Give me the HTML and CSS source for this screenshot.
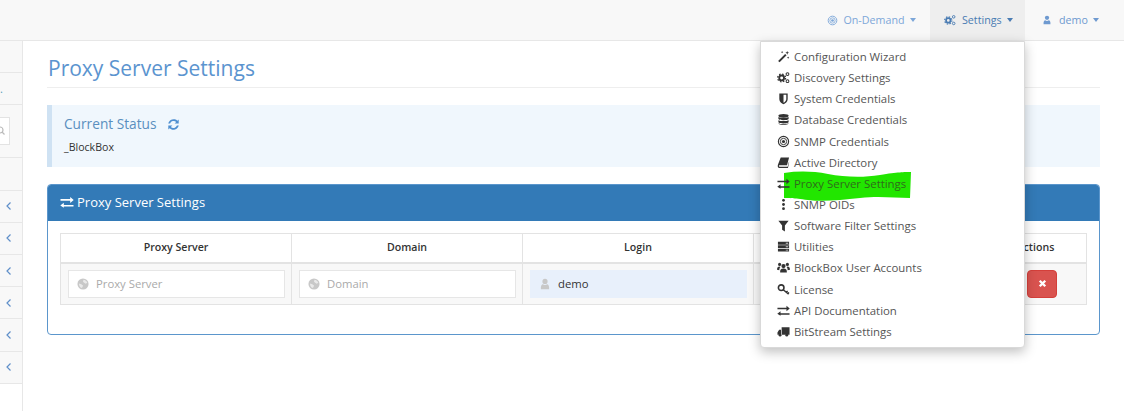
FILE: index.html
```html
<!DOCTYPE html>
<html lang="en">
<head>
<meta charset="utf-8">
<title>Proxy Server Settings</title>
<link rel="stylesheet" href="styles.css">
</head>
<body>
<svg class="defs" width="0" height="0" aria-hidden="true">
  <defs>
    <symbol id="i-wand" viewBox="0 0 14 14"><path d="M2 12.500 9.500 5" stroke="currentColor" stroke-width="2.200" fill="none"/><path d="M11 1l.6 1.400L13 3l-1.400.6L11 5l-.6-1.400L9 3l1.400-.6zM5.500 1l.4.9.9.4-.9.4-.4.9-.4-.9-.9-.4.9-.4zM12 7l.4.9.9.4-.9.4-.4.9-.4-.9-.9-.4.9-.4z" fill="currentColor"/></symbol>
    <symbol id="i-cogs" viewBox="0 0 14 14"><circle cx="5" cy="7.500" r="2.600" fill="none" stroke="currentColor" stroke-width="2"/><circle cx="5" cy="7.500" r="4.200" fill="none" stroke="currentColor" stroke-width="1.400" stroke-dasharray="1.700 1.600"/><circle cx="11.300" cy="3.300" r="1.500" fill="none" stroke="currentColor" stroke-width="1.100"/><circle cx="11.300" cy="11" r="1.500" fill="none" stroke="currentColor" stroke-width="1.100"/></symbol>
    <symbol id="i-shield" viewBox="0 0 14 14"><path fill-rule="evenodd" d="M2.500 1.500h9v6.200c0 2.600-2.600 4.600-4.500 5.600-1.900-1-4.500-3-4.500-5.600zM7 3v8.600c1.500-.9 3-2.300 3-3.900V3z" fill="currentColor"/></symbol>
    <symbol id="i-db" viewBox="0 0 14 14"><ellipse cx="7" cy="3" rx="5.500" ry="2" fill="currentColor"/><path d="M1.500 4.300c1 1.200 10 1.200 11 0V6.500c-1 1.700-10 1.700-11 0zM1.500 7.800c1 1.200 10 1.200 11 0V10c-1 1.700-10 1.700-11 0z" fill="currentColor"/><path d="M1.500 11.100c1 1.200 10 1.200 11 0c0 2.300-11 2.300-11 0z" fill="currentColor"/></symbol>
    <symbol id="i-target" viewBox="0 0 14 14"><circle cx="7" cy="7" r="5.500" fill="none" stroke="currentColor" stroke-width="1.200"/><circle cx="7" cy="7" r="3.400" fill="none" stroke="currentColor" stroke-width="1"/><circle cx="7" cy="7" r="1.700" fill="currentColor"/></symbol>
    <symbol id="i-book" viewBox="0 0 14 14"><path fill-rule="evenodd" d="M4 1.500h9l-2.200 8.500H2.500C2 10 1.900 11.700 2.800 11.700h8.700l1.500-6v1.500L11.800 13H2.600C1 13 .4 11 1 9.300z" fill="currentColor"/></symbol>
    <symbol id="i-exchange" viewBox="0 0 14 12"><path d="M.5 3.100h9.700V.9L13.700 3.900 10.200 6.900V4.700H.5zM13.500 7.300v1.600H3.800v-2.200L.3 9.400l3.500 2.300V10.500h9.700z" fill="currentColor"/></symbol>
    <symbol id="i-dots" viewBox="0 0 14 14"><circle cx="7" cy="2.500" r="1.500" fill="currentColor"/><circle cx="7" cy="7" r="1.500" fill="currentColor"/><circle cx="7" cy="11.500" r="1.500" fill="currentColor"/></symbol>
    <symbol id="i-filter" viewBox="0 0 14 14"><path d="M1.500 2h11L8.500 7v6.500l-3-2V7z" fill="currentColor"/></symbol>
    <symbol id="i-server" viewBox="0 0 14 14"><path fill-rule="evenodd" d="M1 2h12v3H1zM9.500 3v1h1V3zM11 3v1h1V3zM1 5.700h12v3H1zM9.500 6.700v1h1v-1zM11 6.700v1h1v-1zM1 9.400h12v3H1zM9.500 10.400v1h1v-1zM11 10.400v1h1v-1z" fill="currentColor"/></symbol>
    <symbol id="i-users" viewBox="0 0 14 14"><circle cx="7" cy="5.500" r="2.300" fill="currentColor"/><circle cx="2.800" cy="3.700" r="1.700" fill="currentColor"/><circle cx="11.200" cy="3.700" r="1.700" fill="currentColor"/><path d="M3.400 12.500c-.3-2.800.8-4.300 3.600-4.300s3.900 1.500 3.600 4.300zM0 9.500c0-2.300 1-3.600 2.700-3.600l1 .6C3 7.300 2.500 8.300 2.500 9.900zM14 9.500c0-2.300-1-3.600-2.700-3.600l-1 .6c.7.8 1.200 1.800 1.200 3.400z" fill="currentColor"/></symbol>
    <symbol id="i-key" viewBox="0 0 14 14"><circle cx="4.500" cy="5" r="3" fill="none" stroke="currentColor" stroke-width="1.700"/><path d="M6.700 7.200 12.500 12M10 9.700l1.500-1M11.700 11.200l1.300-1" stroke="currentColor" stroke-width="1.500" fill="none"/></symbol>
    <symbol id="i-truck" viewBox="0 0 14 14"><path d="M5 2.500h8.500v8H5zM4.300 5v5.500H.5V8l1.800-3z" fill="currentColor"/><circle cx="3.300" cy="11" r="1.500" fill="currentColor"/><circle cx="10.500" cy="11" r="1.500" fill="currentColor"/></symbol>
    <symbol id="i-user" viewBox="0 0 14 14"><circle cx="7" cy="4" r="3" fill="currentColor"/><path d="M2.200 13c-.4-3.800 1-5.700 2.300-5.700.8.600 1.600 1 2.500 1s1.700-.4 2.500-1c1.300 0 2.700 1.900 2.300 5.700z" fill="currentColor"/></symbol>
    <symbol id="i-globe" viewBox="0 0 14 14"><circle cx="7" cy="7" r="6.500" fill="currentColor"/><path d="M7.500 2c2 .2 3.800 1.600 4.500 3.500l-1.800 1.200-1.500-1-1.700-1.200zM2.300 6.500l2.700.8 2 1.500-.6 2-1.300 1C3.400 11 2.300 9 2.300 6.500z" fill="#fff" opacity=".6"/></symbol>
    <symbol id="i-refresh" viewBox="0 0 14 14"><path d="M12.600 1.500v4.400H8.200l1.700-1.700A4.100 4.100 0 0 0 3.300 5.800H1.300A6 6 0 0 1 11.200 2.900zM1.400 12.500V8.100h4.400L4.100 9.800a4.100 4.100 0 0 0 6.600-1.600h2A6 6 0 0 1 2.800 11.100z" fill="currentColor"/></symbol>
    <symbol id="i-times" viewBox="0 0 14 14"><path d="M3.500 3.500l7 7M10.500 3.500l-7 7" stroke="currentColor" stroke-width="3" fill="none"/></symbol>
    <symbol id="i-chev" viewBox="0 0 8 10"><path d="M5.500 1.500 2 5l3.500 3.500" stroke="currentColor" stroke-width="1.200" fill="none"/></symbol>
    <symbol id="i-search" viewBox="0 0 8 10"><circle cx="0" cy="4" r="3" fill="none" stroke="currentColor" stroke-width="1.200"/><path d="M2 6l2.500 2.500" stroke="currentColor" stroke-width="1.200"/></symbol>
  </defs>
</svg>

<header class="topbar">
  <nav class="topnav">
    <a class="navitem nav-ondemand"><svg class="nav-ico"><use href="#i-target"/></svg>On-Demand<span class="caret"></span></a>
    <div class="navitem nav-settings">
      <svg class="nav-ico"><use href="#i-cogs"/></svg>Settings<span class="caret"></span>
      <ul class="menu">
        <li><svg><use href="#i-wand"/></svg>Configuration Wizard</li>
        <li><svg><use href="#i-cogs"/></svg>Discovery Settings</li>
        <li><svg><use href="#i-shield"/></svg>System Credentials</li>
        <li><svg><use href="#i-db"/></svg>Database Credentials</li>
        <li><svg><use href="#i-target"/></svg>SNMP Credentials</li>
        <li><svg><use href="#i-book"/></svg>Active Directory</li>
        <li class="marked">
          <svg class="blob" viewBox="0 0 128 30" preserveAspectRatio="none"><path d="M0 2C14 0 28 0 44 3S78 7 96 4 120 1 127 1L126 27C110 27 96 25 76 27S40 31 24 29 6 27 0 27z"/></svg>
          <svg><use href="#i-exchange"/></svg><span class="label">Proxy Server Settings</span>
        </li>
        <li><svg><use href="#i-dots"/></svg>SNMP OIDs</li>
        <li><svg><use href="#i-filter"/></svg>Software Filter Settings</li>
        <li><svg><use href="#i-server"/></svg>Utilities</li>
        <li><svg><use href="#i-users"/></svg>BlockBox User Accounts</li>
        <li><svg><use href="#i-key"/></svg>License</li>
        <li><svg><use href="#i-exchange"/></svg>API Documentation</li>
        <li><svg><use href="#i-truck"/></svg>BitStream Settings</li>
      </ul>
    </div>
    <a class="navitem nav-user"><svg class="nav-ico"><use href="#i-user"/></svg>demo<span class="caret"></span></a>
  </nav>
</header>

<div class="page">
  <aside class="sidebar">
    <div class="side-row"></div>
    <div class="side-row side-dot">.</div>
    <div class="side-row side-search"><div class="side-input"><svg class="side-glass"><use href="#i-search"/></svg></div></div>
    <div class="side-row"></div>
    <div class="side-row"><svg class="chev"><use href="#i-chev"/></svg></div>
    <div class="side-row"><svg class="chev"><use href="#i-chev"/></svg></div>
    <div class="side-row"><svg class="chev"><use href="#i-chev"/></svg></div>
    <div class="side-row"><svg class="chev"><use href="#i-chev"/></svg></div>
    <div class="side-row"><svg class="chev"><use href="#i-chev"/></svg></div>
    <div class="side-row"><svg class="chev"><use href="#i-chev"/></svg></div>
  </aside>

  <main class="content">
    <h1 class="page-title">Proxy Server Settings</h1>

    <section class="callout">
      <h4 class="callout-title">Current Status <svg class="refresh"><use href="#i-refresh"/></svg></h4>
      <p class="callout-text">_BlockBox</p>
    </section>

    <section class="panel">
      <div class="panel-head"><svg class="panel-ico"><use href="#i-exchange"/></svg>Proxy Server Settings</div>
      <div class="panel-body">
        <table class="grid">
          <thead>
            <tr>
              <th class="col">Proxy Server</th>
              <th class="col">Domain</th>
              <th class="col">Login</th>
              <th class="col">Password</th>
              <th>Actions</th>
            </tr>
          </thead>
          <tbody>
            <tr>
              <td><div class="field"><svg><use href="#i-globe"/></svg><span class="ph">Proxy Server</span></div></td>
              <td><div class="field"><svg><use href="#i-globe"/></svg><span class="ph">Domain</span></div></td>
              <td><div class="field filled"><svg><use href="#i-user"/></svg><span>demo</span></div></td>
              <td><div class="field filled"><svg><use href="#i-user"/></svg><span></span></div></td>
              <td class="act"><button class="btn-del" type="button" aria-label="Delete"><svg><use href="#i-times"/></svg></button></td>
            </tr>
          </tbody>
        </table>
      </div>
    </section>
  </main>
</div>
</body>
</html>
```
FILE: styles.css
```css
* { box-sizing: border-box; }
html, body { height: 100%; }
body {
  margin: 0;
  overflow: hidden;
  background: #fff;
  color: #333;
  font-family: "Open Sans", "Liberation Sans", sans-serif;
  font-size: 10.700px;
}
.defs { position: absolute; }

.topbar {
  height: 41px;
  background: #f8f8f8;
  border-bottom: 1px solid #e7e7e7;
}
.topnav {
  display: flex;
  justify-content: flex-end;
  height: 40px;
  padding-right: 10px;
}
.navitem {
  position: relative;
  display: flex;
  align-items: center;
  height: 40px;
  padding: 0 14px;
  white-space: nowrap;
}
.nav-ondemand { color: #7da7d9; }
.nav-ondemand .nav-ico { width: 11px; height: 11px; }
.nav-settings { flex: none; width: 95px; color: #4a7cb3; background: #eeeeee; }
.nav-user { flex: none; width: 89px; padding-left: 17px; color: #6f9ad0; }
.nav-user .nav-ico { width: 10px; height: 10px; margin-right: 7px; }
.nav-ico { flex: none; width: 12px; height: 12px; margin-right: 6px; }
.caret {
  flex: none;
  width: 0;
  height: 0;
  margin-left: 5.500px;
  border-top: 4px solid currentColor;
  border-left: 3.500px solid transparent;
  border-right: 3.500px solid transparent;
}

.menu {
  position: absolute;
  top: 41px;
  right: 0;
  z-index: 10;
  width: 265px;
  height: 307px;
  margin: 0;
  padding: 4px 0 0;
  list-style: none;
  background: #fff;
  border: 1px solid #d9d9d9;
  border-radius: 0 0 4px 4px;
  box-shadow: 0 4px 12px rgba(0, 0, 0, .25);
  color: #555;
  font-size: 11.400px;
}
.menu li {
  position: relative;
  display: flex;
  align-items: center;
  height: 21.150px;
  padding-left: 16px;
}
.menu li > svg:not(.blob) {
  flex: none;
  width: 13px;
  height: 13px;
  margin-right: 4px;
  color: #333;
}
.menu .blob {
  position: absolute;
  left: 23px;
  top: -2px;
  width: 128px;
  height: 30px;
  fill: #22e600;
}
.menu .marked svg:not(.blob), .menu .label { position: relative; }
.menu .marked .label { color: #2f6b1c; }

.page { display: flex; height: 370px; }
.sidebar {
  flex: none;
  width: 23px;
  background: #fff;
  border-right: 1px solid #e7e7e7;
}
.side-row {
  display: flex;
  align-items: center;
  height: 32.200px;
  background: #f8f8f8;
  border-bottom: 1px solid #e7e7e7;
}
.side-dot { color: #5aa0b8; font-size: 11px; line-height: 1; }
.side-search { height: 53px; }
.side-input {
  display: flex;
  align-items: center;
  width: 10px;
  height: 28px;
  background: #fff;
  border: 1px solid #e3e3e3;
  border-left: 0;
}
.side-glass { width: 8px; height: 10px; color: #bbb; }
.chev { width: 8px; height: 10px; margin-left: 5px; color: #5f8fc9; }

.content {
  flex: 1;
  min-width: 0;
  padding: 0 24px;
}
.page-title {
  height: 47px;
  margin: 0 0 17px;
  padding: 9px 0 0 1px;
  border-bottom: 1px solid #eeeeee;
  color: #5b94cf;
  font-size: 21px;
  font-weight: 400;
  line-height: 36px;
}
.callout {
  height: 62px;
  margin-bottom: 17px;
  padding: 9px 12px;
  background: #f0f7fd;
  border-left: 5px solid #cfe2f3;
}
.callout-title {
  display: flex;
  align-items: center;
  margin: 0 0 4px;
  color: #5a8fbf;
  font-size: 13.700px;
  font-weight: 400;
  line-height: 20px;
}
.refresh { width: 13px; height: 13px; margin-left: 10px; color: #4f8fd0; }
.callout-text {
  margin: 0;
  font-size: 10.600px;
  line-height: 18px;
}
.panel {
  height: 151px;
  border: 1px solid #5b96cc;
  border-radius: 4px;
}
.panel-head {
  display: flex;
  align-items: center;
  height: 36px;
  padding: 0 0 2px 12px;
  background: #337ab7;
  border-radius: 3px 3px 0 0;
  color: #fff;
  font-size: 13px;
}
.panel-ico { width: 14px; height: 12px; margin-right: 3px; }
.panel-body { padding: 12px 12px 0; }
.grid {
  width: 1027px;
  border-collapse: collapse;
  table-layout: fixed;
  font-size: 11.300px;
}
.grid th, .grid td { border: 1px solid #e3e3e3; }
.grid th {
  height: 29px;
  padding: 0 0 2px;
  border-bottom-width: 2px;
  font-size: 10.600px;
  font-weight: 600;
  color: #333;
  text-align: center;
}
.grid td { height: 41px; padding: 6px 6px 6px 7px; background: #f8f8f8; }
.col { width: 231px; }
.field {
  display: flex;
  align-items: center;
  height: 28px;
  padding-left: 8px;
  background: #fff;
  border: 1px solid #e6e6e6;
  color: #333;
}
.field svg { flex: none; width: 12px; height: 12px; margin-right: 7px; color: #c8c8c8; }
.ph { color: #aaa; }
.filled { background: #e8f0fb; border-color: #e8f0fb; }
.grid .act { padding-right: 29px; text-align: right; }
.btn-del {
  display: inline-flex;
  align-items: center;
  justify-content: center;
  width: 30px;
  height: 28px;
  padding: 0;
  vertical-align: top;
  background: #d9534f;
  border: 1px solid #d43f3a;
  border-radius: 4px;
  color: #fff;
}
.btn-del svg { width: 11px; height: 11px; }
```
